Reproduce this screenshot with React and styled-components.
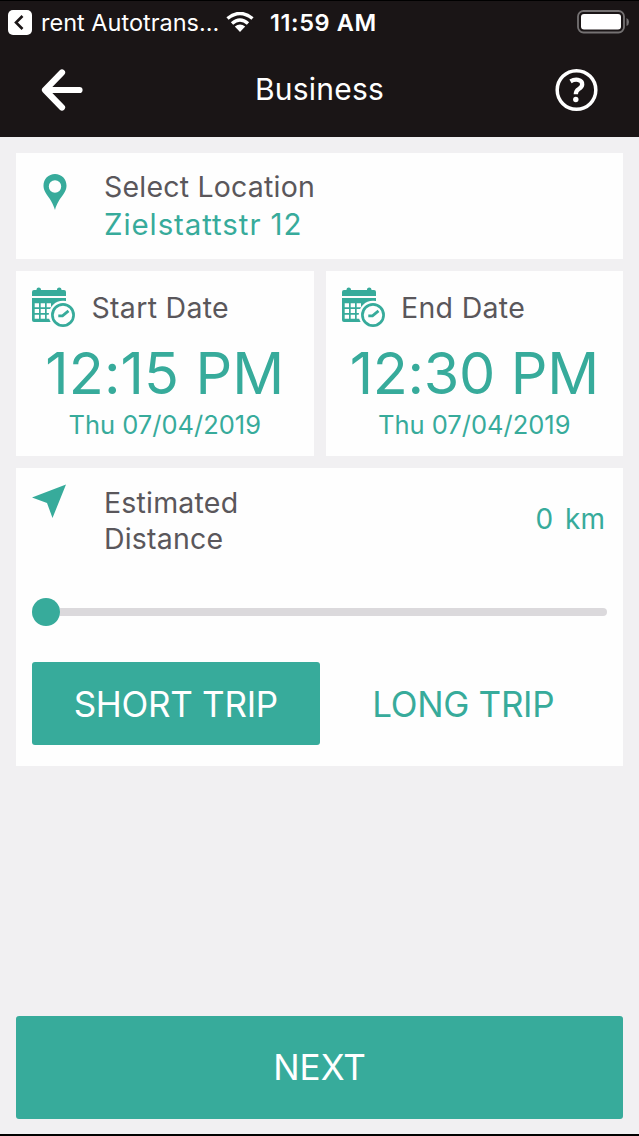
import React, { useState } from "react";
import styled, { createGlobalStyle } from "styled-components";

const GlobalStyle = createGlobalStyle`
  * {
    box-sizing: border-box;
  }
  body {
    margin: 0;
    background-color: #f1f0f2;
    font-family: Inter, "Liberation Sans", sans-serif;
  }
  button {
    font-family: inherit;
    border: none;
    padding: 0;
    background: none;
    cursor: pointer;
  }
  svg {
    display: block;
    flex: none;
  }
`;

const Screen = styled.div`
  display: flex;
  flex-direction: column;
  height: 1136px;
  width: 639px;
  overflow: hidden;
  border-bottom: 2px solid #000000;
`;

const Header = styled.header`
  height: 137px;
  background-color: #1a1516;
  border-top: 1px solid #000000;
  color: #ffffff;
`;

const StatusBar = styled.div`
  display: flex;
  align-items: center;
  height: 42px;
  padding: 0 10px 0 8px;
  white-space: nowrap;
`;

const AppName = styled.span`
  width: 193px;
  padding-left: 8px;
  font-size: 23.5px;
  letter-spacing: 0;
`;

const Clock = styled.span`
  flex: 1;
  padding-left: 16px;
  font-size: 23.5px;
  font-weight: 600;
  letter-spacing: 0.6px;
`;

const NavBar = styled.div`
  display: flex;
  align-items: center;
  justify-content: space-between;
  height: 94px;
  padding: 0 41px;
`;

const NavButton = styled.button`
  width: 43px;
  height: 44px;
`;

const Title = styled.h1`
  margin: 0 0 3px;
  font-size: 30px;
  font-weight: 400;
  line-height: 36px;
  letter-spacing: 0.2px;
`;

const Content = styled.main`
  flex: 1;
  display: flex;
  flex-direction: column;
  gap: 12px;
  padding: 16px 16px 15px;
`;

const Card = styled.section`
  background-color: #fefefe;
`;

const LocationCard = styled(Card)`
  display: flex;
  height: 106px;
  padding: 16px 16px 0 27px;
`;

const LocationIcon = styled.div`
  width: 61px;
  padding-top: 5px;
`;

const Label = styled.div`
  color: #5a575b;
  font-size: 28.5px;
  line-height: 36px;
  letter-spacing: ${(props) => props.$spacing || 0}px;
`;

const Address = styled.div`
  color: #37ab9b;
  font-size: 29.5px;
  line-height: 38px;
  letter-spacing: 0.9px;
`;

const Dates = styled.div`
  display: grid;
  grid-template-columns: 1fr 1fr;
  gap: 12px;
`;

const DateCard = styled(Card)`
  height: 185px;
  padding: 16px 16px 0;
  color: #37ab9b;
`;

const DateHead = styled.div`
  display: flex;
  align-items: center;
  gap: 15.5px;
  height: 41px;
`;

const Time = styled.div`
  margin: 10px -16px 0;
  text-align: center;
  font-size: 57.5px;
  line-height: 70px;
  white-space: nowrap;
  letter-spacing: ${(props) => props.$spacing || 0}px;
`;

const Day = styled.div`
  margin-top: 1px;
  text-align: center;
  font-size: 25.5px;
  line-height: 32px;
`;

const DistanceCard = styled(Card)`
  height: 298px;
  padding: 16px 16px 0;
`;

const DistanceHead = styled.div`
  display: flex;
  height: 72px;
`;

const DistanceIcon = styled.div`
  width: 72px;
`;

const DistanceLabel = styled(Label)`
  flex: 1;
  padding-top: 1px;
`;

const Distance = styled.div`
  align-self: center;
  padding: 0 2px 2px 0;
  color: #37ab9b;
  font-size: 28px;
  word-spacing: 4px;
`;

const Slider = styled.div`
  display: flex;
  align-items: center;
  height: 28px;
  margin-top: 42px;
`;

const Thumb = styled.div`
  width: 28px;
  height: 28px;
  border-radius: 50%;
  background-color: #37ab9b;
`;

const Track = styled.div`
  flex: 1;
  height: 8px;
  border-radius: 0 4px 4px 0;
  background-color: #dbd9dc;
`;

const Trips = styled.div`
  display: grid;
  grid-template-columns: 1fr 1fr;
  margin-top: 36px;
`;

const TripButton = styled.button`
  height: 83px;
  border-radius: 3px;
  font-size: 35px;
  letter-spacing: -0.3px;
  color: ${(props) => (props.$active ? "#ffffff" : "#37ab9b")};
  background-color: ${(props) => (props.$active ? "#37ab9b" : "transparent")};
`;

const NextButton = styled.button`
  height: 103.5px;
  margin-top: auto;
  border-radius: 3px;
  background-color: #37ab9b;
  color: #ffffff;
  font-size: 35px;
`;

function CalendarIcon() {
  return (
    <svg width="44" height="41" viewBox="0 0 44 41">
      <path
        fill="#37ab9b"
        d="M2 3H4.500V2.500Q4.500 0.500 6.700 0.500T9 2.500V3H25V2.500Q25 0.500 27.200 0.500T29.500 2.500V3H32Q34 3 34 5V9H0V5Q0 3 2 3Z"
      />
      <path
        fill="#37ab9b"
        fillRule="evenodd"
        d="M0 11H34V15L20 21V35H2Q0 35 0 33ZM2.700 16.300V20.300H7V16.300ZM8.700 16.300V20.300H13V16.300ZM14.700 16.300V20.300H19V16.300ZM2.700 22V26H7V22ZM8.700 22V26H13V22ZM14.700 22V26H19V22ZM2.700 27.700V31.800H7V27.700ZM8.700 27.700V31.800H13V27.700ZM14.700 27.700V31.800H19V27.700Z"
      />
      <circle cx="31" cy="28" r="14.300" fill="#fefefe" />
      <circle cx="31" cy="28" r="10.600" fill="none" stroke="#37ab9b" strokeWidth="2.700" />
      <path d="M26.300 28.800H30.500L36.500 23.800" fill="none" stroke="#37ab9b" strokeWidth="2.800" />
    </svg>
  );
}

function DatePanel({ label, time, day, spacing }) {
  return (
    <DateCard>
      <DateHead>
        <CalendarIcon />
        <Label $spacing={0.3}>{label}</Label>
      </DateHead>
      <Time $spacing={spacing}>{time}</Time>
      <Day>{day}</Day>
    </DateCard>
  );
}

function App() {
  const [trip, setTrip] = useState("short");

  return (
    <>
      <GlobalStyle />
      <Screen>
        <Header>
          <StatusBar>
            <svg width="25" height="25" viewBox="0 0 25 25">
              <rect width="24" height="25" rx="5" fill="#ffffff" />
              <path d="M14.500 6L8 12.500L14.500 19" fill="none" stroke="#1a1516" strokeWidth="2.600" />
            </svg>
            <AppName>rent Autotrans...</AppName>
            <svg width="28" height="21" viewBox="0 0 28 21">
              <path d="M1.500 6.500Q14 -3.500 26.500 6.500M6 11.500Q14 4.500 22 11.500" fill="none" stroke="#ffffff" strokeWidth="3.500" />
              <path d="M8.800 14.500Q14 10.500 19.200 14.500L14 20Z" fill="#ffffff" />
            </svg>
            <Clock>11:59 AM</Clock>
            <svg width="52" height="24" viewBox="0 0 52 24">
              <rect x="1" y="1" width="46" height="21.500" rx="5.500" fill="none" stroke="#747172" strokeWidth="1.800" />
              <rect x="4" y="4" width="40" height="15.500" rx="3" fill="#ffffff" />
              <path d="M49.500 8Q52 9 52 12T49.500 16Z" fill="#747172" />
            </svg>
          </StatusBar>
          <NavBar>
            <NavButton aria-label="Back">
              <svg width="43" height="44" viewBox="0 0 43 44">
                <path
                  d="M21 4.500L4 22L21 39.500M5 22H38.500"
                  fill="none"
                  stroke="#ffffff"
                  strokeWidth="6.200"
                  strokeLinecap="round"
                  strokeLinejoin="round"
                />
              </svg>
            </NavButton>
            <Title>Business</Title>
            <NavButton aria-label="Help">
              <svg width="43" height="44" viewBox="0 0 43 44">
                <circle cx="21.500" cy="22" r="19.300" fill="none" stroke="#ffffff" strokeWidth="3.500" />
                <path
                  d="M15.500 13.300Q19 11.200 23 11.800Q27.500 12.700 27.200 16.500Q27 19 23.800 21Q20.800 22.800 20.800 26.300"
                  fill="none"
                  stroke="#ffffff"
                  strokeWidth="4.300"
                />
                <circle cx="20.800" cy="31.500" r="2.700" fill="#ffffff" />
              </svg>
            </NavButton>
          </NavBar>
        </Header>
        <Content>
          <LocationCard>
            <LocationIcon>
              <svg width="24" height="36" viewBox="0 0 24 36">
                <path
                  fill="#37ab9b"
                  fillRule="evenodd"
                  d="M12 0C5.500 0 0.500 5 0.500 11.500C0.500 20 8 22.500 12 36C16 22.500 23.500 20 23.500 11.500C23.500 5 18.500 0 12 0ZM12 6.300A6.200 6.200 0 1 1 12 18.700A6.200 6.200 0 1 1 12 6.300Z"
                />
              </svg>
            </LocationIcon>
            <div>
              <Label $spacing={0.2}>Select Location</Label>
              <Address>Zielstattstr 12</Address>
            </div>
          </LocationCard>
          <Dates>
            <DatePanel label="Start Date" time="12:15 PM" day="Thu 07/04/2019" spacing={0.1} />
            <DatePanel label="End Date" time="12:30 PM" day="Thu 07/04/2019" spacing={-0.3} />
          </Dates>
          <DistanceCard>
            <DistanceHead>
              <DistanceIcon>
                <svg width="34" height="35" viewBox="0 0 34 35">
                  <path d="M34 0.500L20.500 34L15 19L0 13.500Z" fill="#37ab9b" />
                </svg>
              </DistanceIcon>
              <DistanceLabel $spacing={0.2}>
                Estimated
                <br />
                Distance
              </DistanceLabel>
              <Distance>0 km</Distance>
            </DistanceHead>
            <Slider>
              <Thumb />
              <Track />
            </Slider>
            <Trips>
              <TripButton $active={trip === "short"} onClick={() => setTrip("short")}>
                SHORT TRIP
              </TripButton>
              <TripButton $active={trip === "long"} onClick={() => setTrip("long")}>
                LONG TRIP
              </TripButton>
            </Trips>
          </DistanceCard>
          <NextButton>NEXT</NextButton>
        </Content>
      </Screen>
    </>
  );
}

export default App;
